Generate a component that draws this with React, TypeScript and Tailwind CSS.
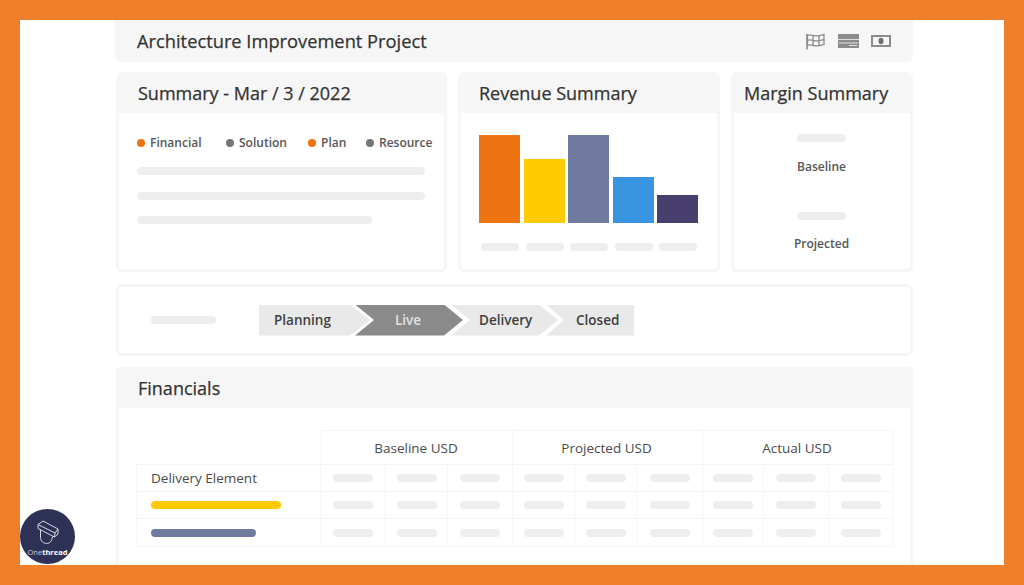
const Pill = ({ className }: { className: string }) => (
  <div className={`rounded-full bg-[#eeeeee] ${className}`} />
);

function FlagIcon() {
  return (
    <svg width="20" height="17" viewBox="0 0 20 17" fill="none" stroke="#8c8c8c" strokeWidth="1.300">
      <path d="M1 1v15.500" strokeWidth="1.600" />
      <path d="M1.500 2.500c3-1.600 5 .2 8 .4s5-.4 8.500-1.400v10c-3.500 1-5.500 1.600-8.500 1.400s-5-2-8-.4z" />
      <path d="M7 2.500v10M13 3v10M1.500 7.500c3-1.600 5 .2 8 .4s5-.4 8.500-1.400" />
    </svg>
  );
}

function CardIcon() {
  return (
    <svg width="21" height="14" viewBox="0 0 21 14">
      <rect width="21" height="14" fill="#8c8c8c" />
      <path d="M0 5.500h21M1 9h19M11 11.500h8" stroke="#f6f6f6" strokeWidth="0.800" />
    </svg>
  );
}

function MoneyIcon() {
  return (
    <svg width="20" height="12" viewBox="0 0 20 12">
      <rect width="20" height="12" fill="#8c8c8c" />
      <rect x="2" y="2" width="16" height="8" fill="#f6f6f6" />
      <ellipse cx="10" cy="6" rx="2.500" ry="3.200" fill="#6f6f6f" />
    </svg>
  );
}

function LogoBadge() {
  return (
    <div className="absolute left-[20px] top-[509px] flex h-[55px] w-[55px] flex-col items-center rounded-full bg-[#2e3156] pt-[11px]">
      <svg width="22" height="25" viewBox="0 0 22 25" fill="none" stroke="#d9d9e2" strokeWidth="1">
        <path d="M1 4.500l5-3.500 15 8-3 4z" />
        <path d="M1 4.500v4l16.500 8.500.500-4" />
        <path d="M3.500 9.500v8c0 3.500 3 6 6 6 3.500 0 5.500-2.500 6-7" />
        <path d="M17.500 17l3.500-3v-5" />
      </svg>
      <div className="mt-[2px] text-[7.500px] leading-[10px] text-[#c9cad8]">
        One<span className="font-bold text-white">thread</span>
      </div>
    </div>
  );
}

function Card({ title, className, children }: { title: string; className: string; children: React.ReactNode }) {
  return (
    <section className={`flex shrink-0 flex-col overflow-hidden rounded-[6px] border-[3px] border-t-0 border-[#f6f6f6] bg-white ${className}`}>
      <h2 className="-mx-[3px] h-[41px] bg-[#f6f6f6] text-[18px] leading-[43px] font-normal text-[#333333] [-webkit-text-stroke:0.25px_#333333]">{title}</h2>
      {children}
    </section>
  );
}

const legend = [
  { label: 'Financial', color: 'bg-[#ee7311]', width: 'w-[89px]' },
  { label: 'Solution', color: 'bg-[#757575]', width: 'w-[82px]' },
  { label: 'Plan', color: 'bg-[#ee7311]', width: 'w-[58px]' },
  { label: 'Resource', color: 'bg-[#757575]', width: 'w-[70px]' },
];

const bars = [
  { h: 'h-[88px]', color: 'bg-[#ee7311]' },
  { h: 'h-[64px]', color: 'bg-[#ffcb00]' },
  { h: 'h-[88px]', color: 'bg-[#6f7a9e]' },
  { h: 'h-[46px]', color: 'bg-[#3995e0]' },
  { h: 'h-[28px]', color: 'bg-[#493f6e]' },
];

function Stepper() {
  const text = 'flex h-[31px] shrink-0 items-center pt-[1px] text-[13.500px] font-semibold';
  return (
    <div className="flex items-center">
      <div className={`${text} w-[111px] bg-[#e9e9e9] pl-[15px] text-[#3f3f3f] [clip-path:polygon(0_0,91px_0,111px_50%,91px_100%,0_100%)]`}>Planning</div>
      <div className={`${text} -ml-[15px] w-[108px] bg-[#8a8a8a] pl-[40px] text-[#e2e2e2] [clip-path:polygon(0_0,89px_0,108px_50%,89px_100%,0_100%,19px_50%)]`}>Live</div>
      <div className={`${text} -ml-[12px] w-[107px] bg-[#e9e9e9] pl-[28px] text-[#3f3f3f] [clip-path:polygon(0_0,88px_0,107px_50%,88px_100%,0_100%,19px_50%)]`}>Delivery</div>
      <div className={`${text} -ml-[12px] w-[88px] bg-[#e9e9e9] pl-[30px] text-[#3f3f3f] [clip-path:polygon(0_0,100%_0,100%_100%,0_100%,18px_50%)]`}>Closed</div>
    </div>
  );
}

const cell = 'flex items-center justify-center border-r-[1.500px] border-b-[1.500px] border-[#f5f5f5]';
const subCols = Array.from({ length: 9 });
const rowHeights = ['h-[27px]', 'h-[27px]', 'h-[28px]'];

function Table() {
  return (
    <div className="ml-[17px] mt-[22px] grid w-[758px] grid-cols-[185px_65px_62px_65px_62px_62px_66px_61px_65px_65px]">
      <div className="h-[35px] border-b-[1.500px] border-[#f5f5f5]" />
      {['Baseline USD', 'Projected USD', 'Actual USD'].map((label, i) => (
        <div
          key={label}
          className={`${cell} col-span-3 h-[35px] border-t-[1.500px] pt-[1px] pr-[2px] text-[13.500px] text-[#4a4a4a] ${i === 0 ? 'border-l-[1.500px]' : ''}`}
        >
          {label}
        </div>
      ))}
      {rowHeights.map((h, r) => (
        <div key={r} className="contents">
          <div className={`${h} flex items-center border-b-[1.500px] border-l-[1.500px] border-r-[1.500px] border-[#f5f5f5] pl-[14px]`}>
            {r === 0 && <span className="text-[13.500px] text-[#4a4a4a]">Delivery Element</span>}
            {r === 1 && <div className="h-[8px] w-[130px] rounded-full bg-[#ffcb00]" />}
            {r === 2 && <div className="h-[8px] w-[105px] rounded-full bg-[#6f7a9e]" />}
          </div>
          {subCols.map((_, c) => (
            <div key={c} className={`${cell} ${h}`}>
              <Pill className="h-[8px] w-[40px]" />
            </div>
          ))}
        </div>
      ))}
    </div>
  );
}

export default function App() {
  return (
    <div className="relative h-[585px] w-[1024px] overflow-hidden bg-[#f07f2b] p-[20px] font-['Open_Sans',sans-serif]">
      <main className="flex h-[545px] flex-col bg-white pl-[95px] pr-[91px]">
        <header className="flex h-[42px] shrink-0 items-center justify-between rounded-b-[6px] bg-[#f6f6f6] pl-[22px] pr-[22px]">
          <h1 className="text-[18.300px] font-normal text-[#333333] [-webkit-text-stroke:0.25px_#333333]">Architecture Improvement Project</h1>
          <div className="flex items-center gap-[12px]">
            <FlagIcon />
            <CardIcon />
            <MoneyIcon />
          </div>
        </header>

        <div className="mt-[10px] flex h-[200px] shrink-0 gap-[11px] pl-px">
          <Card title="Summary - Mar / 3 / 2022" className="w-[331px] [&>h2]:pl-[22px]">
            <div className="px-[18px] pt-[22px]">
              <div className="flex h-[16px] items-center">
                {legend.map((item) => (
                  <div key={item.label} className={`flex shrink-0 items-center gap-[5px] ${item.width}`}>
                    <span className={`h-[8px] w-[8px] rounded-full ${item.color}`} />
                    <span className="text-[12px] font-semibold whitespace-nowrap text-[#565656]">{item.label}</span>
                  </div>
                ))}
              </div>
              <div className="mt-[16px] flex flex-col gap-[16.500px]">
                <Pill className="h-[8px] w-[288px]" />
                <Pill className="h-[8px] w-[288px]" />
                <Pill className="h-[8px] w-[235px]" />
              </div>
            </div>
          </Card>

          <Card title="Revenue Summary" className="w-[262px] [&>h2]:pl-[21px]">
            <div className="flex flex-col px-[18px] pt-[21px]">
              <div className="flex h-[89px] items-end gap-[3.500px]">
                {bars.map((bar) => (
                  <div key={bar.color} className={`w-[41px] ${bar.color} ${bar.h}`} />
                ))}
              </div>
              <div className="mt-[20px] flex gap-[6.500px] pl-[2px]">
                {bars.map((bar) => (
                  <Pill key={bar.color} className="h-[8px] w-[38px]" />
                ))}
              </div>
            </div>
          </Card>

          <Card title="Margin Summary" className="w-[182px] [&>h2]:pl-[13px]">
            <div className="flex flex-col items-center pr-px pt-[21px]">
              <Pill className="h-[8px] w-[49px]" />
              <div className="mt-[16px] text-[12px] font-semibold text-[#565656]">Baseline</div>
              <Pill className="mt-[36px] h-[8px] w-[49px]" />
              <div className="mt-[15px] text-[12px] font-semibold text-[#565656]">Projected</div>
            </div>
          </Card>
        </div>

        <section className="ml-px mt-[12px] flex h-[72px] shrink-0 items-center rounded-[6px] border-[3px] border-[#f6f6f6] pl-[32px]">
          <Pill className="mr-[43px] h-[8px] w-[65px]" />
          <Stepper />
        </section>

        <section className="ml-px mt-[11px] flex flex-1 flex-col rounded-t-[6px] border-x-[3px] border-[#f6f6f6]">
          <h2 className="-mx-[3px] h-[41px] shrink-0 rounded-t-[6px] bg-[#f6f6f6] pl-[22px] text-[18px] leading-[43px] font-normal text-[#333333] [-webkit-text-stroke:0.25px_#333333]">Financials</h2>
          <Table />
        </section>
      </main>
      <LogoBadge />
    </div>
  );
}
